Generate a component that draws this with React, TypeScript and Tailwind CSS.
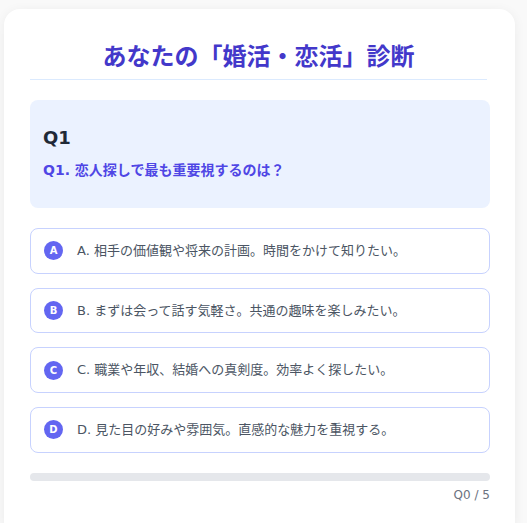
// Konkatsu diagnosis quiz card
const options = [
    { key: 'A', text: 'A. 相手の価値観や将来の計画。時間をかけて知りたい。' },
    { key: 'B', text: 'B. まずは会って話す気軽さ。共通の趣味を楽しみたい。' },
    { key: 'C', text: 'C. 職業や年収、結婚への真剣度。効率よく探したい。' },
    { key: 'D', text: 'D. 見た目の好みや雰囲気。直感的な魅力を重視する。' },
];

const App = () => {
    return (
        <div
            className="min-h-screen bg-[#f9f9f9] pl-[4px] pt-[9px] overflow-hidden"
            style={{ fontFamily: '"DejaVu Sans", "Noto Sans CJK JP", sans-serif' }}
        >
            <div className="w-[511px] min-h-[530px] bg-white rounded-2xl shadow-[0_2px_12px_rgba(0,0,0,0.06)] pl-[26px] pr-[25px] pt-8">
                {/* Title */}
                <h1 className="text-2xl leading-8 font-bold text-center text-[#4338ca] pb-1.5 border-b border-[#dbeafe] mr-[3px]">
                    あなたの「婚活・恋活」診断
                </h1>

                {/* Question */}
                <div className="mt-5 bg-[#ebf2ff] rounded-lg px-[13px] pt-6 pb-7">
                    <h2 className="text-lg leading-7 font-bold text-[#1f2937]">Q1</h2>
                    <p className="mt-2 text-[14px] leading-5 font-bold text-[#4f46e5]">
                        Q1. 恋人探しで最も重要視するのは？
                    </p>
                </div>

                {/* Options */}
                <div className="mt-5 flex flex-col gap-[14px]">
                    {options.map((opt) => (
                        <button
                            key={opt.key}
                            className="flex items-center gap-[14px] h-[45.7px] px-[13px] border border-[#c7d2fe] rounded-lg bg-white text-left"
                        >
                            <span className="w-[19px] h-[19px] rounded-full bg-[#6366f1] text-white text-[10px] font-bold flex items-center justify-center shrink-0">
                                {opt.key}
                            </span>
                            <span className="text-[13px] leading-5 text-[#4b5563]">{opt.text}</span>
                        </button>
                    ))}
                </div>

                {/* Progress */}
                <div className="mt-5 h-2 rounded-full bg-[#e5e7eb]"></div>
                <p className="mt-1 text-right text-xs leading-5 text-[#6b7280]">Q0 / 5</p>
            </div>
        </div>
    );
};

export default App;
